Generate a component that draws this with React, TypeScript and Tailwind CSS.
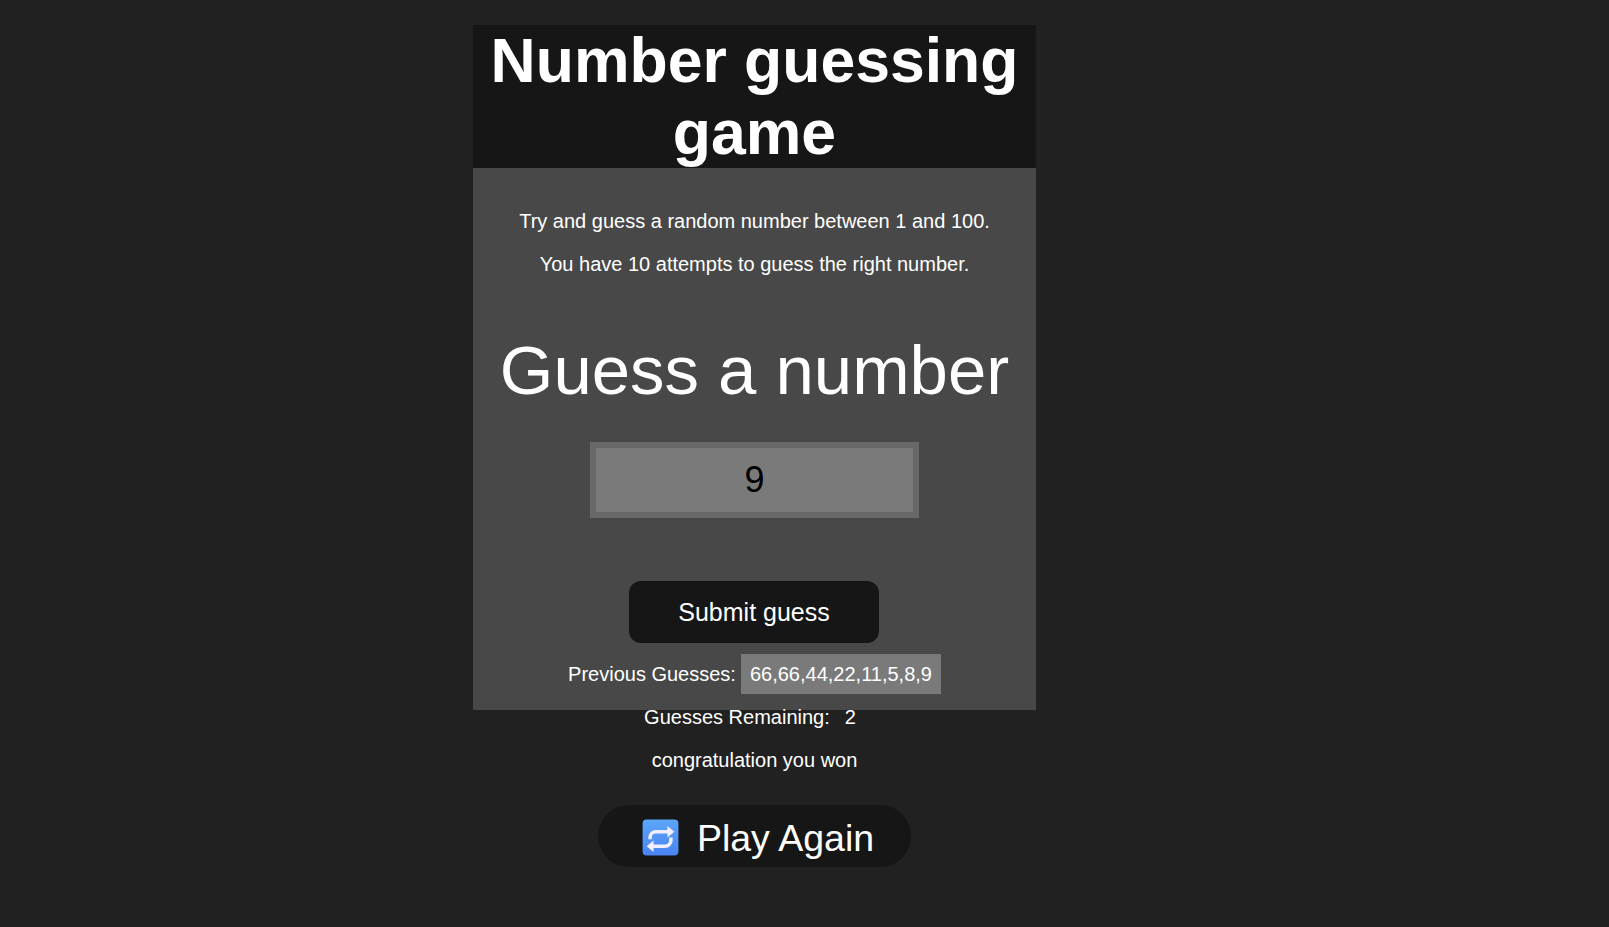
const font = "font-['Liberation_Sans',Arial,sans-serif]";

function RepeatIcon() {
  return (
    <svg viewBox="0 0 32 32" className="w-[37px] h-[37px] shrink-0 mt-[2px] ml-[1px]">
      <defs>
        <linearGradient id="blue" x1="0" y1="0" x2="0" y2="1">
          <stop offset="0" stopColor="#5ba6fb" />
          <stop offset="1" stopColor="#4a84f2" />
        </linearGradient>
      </defs>
      <rect x="0.5" y="0.5" width="31" height="31" rx="3.5" fill="url(#blue)" />
      <path d="M7 17.500V16a5 5 0 0 1 5-5h11" fill="none" stroke="#f3eeff" strokeWidth="3" />
      <path d="M22 6l6 5-6 5z" fill="#f3eeff" />
      <path d="M25 16v2.500a5 5 0 0 1-5 5H9" fill="none" stroke="#f3eeff" strokeWidth="3" />
      <path d="M10 18.500l-6 5 6 5z" fill="#f3eeff" />
    </svg>
  );
}

export default function App() {
  return (
    <div className={`${font} min-h-[927px] bg-[#212121] pt-[25px] text-white text-center`}>
      <div className="ml-[473px] w-[563px]">
        <h1 className="bg-[#161616] text-[62.5px] leading-[71.7px] font-bold h-[143px]">Number guessing game</h1>

        <div className="h-[542px] bg-[#484848] pt-[42px]">
          <p className="text-[20px] leading-[23px]">Try and guess a random number between 1 and 100.</p>
          <p className="text-[20px] leading-[23px] mt-[20px]">You have 10 attempts to guess the right number.</p>

          <h2 className="text-[68.9px] leading-[79px] mt-[55px]">Guess a number</h2>

          <input
            value="9"
            readOnly
            className="block mx-auto mt-[32px] w-[329px] h-[76px] border-[6px] border-[#686868] bg-[#7a7a7a] text-center text-[36px] text-black outline-none"
          />

          <button className="block ml-[156px] mt-[63px] pt-[1px] w-[250px] h-[62px] rounded-[12px] bg-[#161616] text-[25px]">
            Submit guess
          </button>

          <div className="mt-[11px] flex justify-center items-center text-[20px] leading-[23px]">
            <span>Previous Guesses:</span>
            <span className="ml-[5px] bg-[#7a7a7a] px-[9px] py-[8.5px]">66,66,44,22,11,5,8,9</span>
          </div>

          <p className="text-[20px] leading-[23px] mt-[12px]">
            Guesses Remaining:<span className="ml-[15px] mr-[9px]">2</span>
          </p>
          <p className="text-[20px] leading-[23px] mt-[20px]">congratulation you won</p>

          <button className="mt-[33px] mx-auto pl-[6px] w-[313px] h-[62px] rounded-full bg-[#161616] text-[37.5px] flex items-center justify-center gap-[18px]">
            <RepeatIcon />
            <span className="mt-[4px]">Play Again</span>
          </button>
        </div>
      </div>
    </div>
  );
}
